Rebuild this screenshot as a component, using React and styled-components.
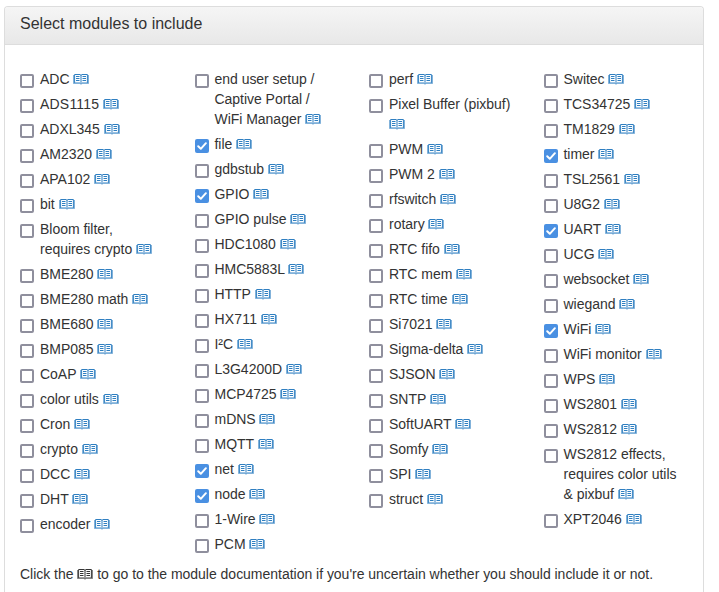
import React from "react";
import styled, { createGlobalStyle } from "styled-components";

const GlobalStyle = createGlobalStyle`
  *, *::before, *::after { box-sizing: border-box; }
  body {
    margin: 0;
    background: #fff;
    color: #333;
    font: 14px/20px "Liberation Sans", Arial, sans-serif;
  }
`;

const Panel = styled.section`
  width: 700px;
  height: 586px;
  margin: 6px 0 0 4px;
  border: 1px solid #ddd;
  border-bottom: 0;
  border-radius: 4px 4px 0 0;
`;

const PanelHeading = styled.header`
  height: 38px;
  padding: 8px 15px 0;
  border-bottom: 1px solid #ddd;
  border-radius: 3px 3px 0 0;
  background: linear-gradient(#f5f5f5, #e8e8e8);
`;

const Title = styled.h3`
  margin: 0;
  font-size: 16px;
  font-weight: 400;
  line-height: 18px;
`;

const Columns = styled.div`
  display: grid;
  grid-template-columns: repeat(4, 174.5px);
  height: 519px;
  padding-top: 24px;
`;

const Column = styled.div`
  display: flex;
  flex-direction: column;
  gap: 5px;
  padding: 0 15px;
`;

const Module = styled.label`
  display: grid;
  grid-template-columns: 14px minmax(0, 1fr);
  column-gap: 6px;
  align-items: start;
`;

const Name = styled.span`
  letter-spacing: ${(p) => p.$tracking}px;
`;

const Checkbox = styled.input`
  appearance: none;
  width: 14px;
  height: 14px;
  margin: 5px 0 0;
  border: 2px solid #8f8f9d;
  border-radius: 2px;
  background: #fff;

  &:checked {
    border: 0;
    background: #4a90e2;
  }
`;

const Control = styled.span`
  display: grid;

  > * { grid-area: 1 / 1; }
`;

const Tick = styled.svg`
  width: 14px;
  height: 14px;
  margin-top: 5px;
  pointer-events: none;
`;

const DocLink = styled.a`
  color: #2f7fc1;
  text-decoration: none;
`;

const BookSvg = styled.svg`
  display: inline-block;
  width: 16px;
  height: 11px;
  vertical-align: -1px;
`;

const Hint = styled.p`
  margin: 0 15px;
  letter-spacing: -0.02px;
  white-space: nowrap;
`;

const Book = () => (
  <BookSvg viewBox="0 0 16 11" fill="none" stroke="currentColor">
    <path d="M1.6 9V.5H7L8 1.3L9 .5H14.4V9" strokeWidth="1" />
    <path d="M8 1V10" strokeWidth="1" />
    <path d="M.5 1V9.5H7L8 10.3L9 9.5H15.5V1" strokeWidth="1" strokeOpacity=".6" />
    <path d="M3 2.5H6.5M3 4.5H6.5M3 6.5H6.5M9.5 2.5H13M9.5 4.5H13M9.5 6.5H13" strokeWidth="1" />
    <path d="M2 8.5H7M9 8.5H14" strokeWidth="1" strokeOpacity=".5" />
  </BookSvg>
);

const columns = [
  ["ADC", "ADS1115", "ADXL345", "AM2320", "APA102", "bit", "Bloom filter, requires crypto", "BME280", "BME280 math", "BME680", "BMP085", "CoAP", "color utils", "Cron", "crypto", "DCC", "DHT", "encoder"],
  ["end user setup / Captive Portal / WiFi Manager", "file", "gdbstub", "GPIO", "GPIO pulse", "HDC1080", "HMC5883L", "HTTP", "HX711", "I²C", "L3G4200D", "MCP4725", "mDNS", "MQTT", "net", "node", "1-Wire", "PCM"],
  ["perf", "Pixel Buffer (pixbuf)", "PWM", "PWM 2", "rfswitch", "rotary", "RTC fifo", "RTC mem", "RTC time", "Si7021", "Sigma-delta", "SJSON", "SNTP", "SoftUART", "Somfy", "SPI", "struct"],
  ["Switec", "TCS34725", "TM1829", "timer", "TSL2561", "U8G2", "UART", "UCG", "websocket", "wiegand", "WiFi", "WiFi monitor", "WPS", "WS2801", "WS2812", "WS2812 effects, requires color utils & pixbuf", "XPT2046"],
];
const selected = new Set(["file", "GPIO", "net", "node", "timer", "UART", "WiFi"]);

// Offsets the tight kerning of consecutive ones.
const trackingFor = (name) => (name.includes("11") ? 0.2 : -0.03);

function ModuleOption({ name }) {
  const [checked, setChecked] = React.useState(selected.has(name));
  return (
    <Module>
      <Control>
        <Checkbox type="checkbox" checked={checked} onChange={(e) => setChecked(e.target.checked)} />
        {checked && (
          <Tick viewBox="0 0 14 14" fill="none" stroke="#fff" strokeWidth="2" strokeLinecap="round" strokeLinejoin="round">
            <path d="M3.2 7.3L5.8 9.8L10.9 4.2" />
          </Tick>
        )}
      </Control>
      <Name $tracking={trackingFor(name)}>
        {name} <DocLink href="#" aria-label={`${name} documentation`}><Book /></DocLink>
      </Name>
    </Module>
  );
}

export default function App() {
  return (
    <>
      <GlobalStyle />
      <Panel>
        <PanelHeading><Title>Select modules to include</Title></PanelHeading>
        <Columns>
          {columns.map((names) => (
            <Column key={names[0]}>
              {names.map((name) => <ModuleOption key={name} name={name} />)}
            </Column>
          ))}
        </Columns>
        <Hint>
          Click the <Book /> to go to the module documentation if you're uncertain whether you should include it or not.
        </Hint>
      </Panel>
    </>
  );
}
